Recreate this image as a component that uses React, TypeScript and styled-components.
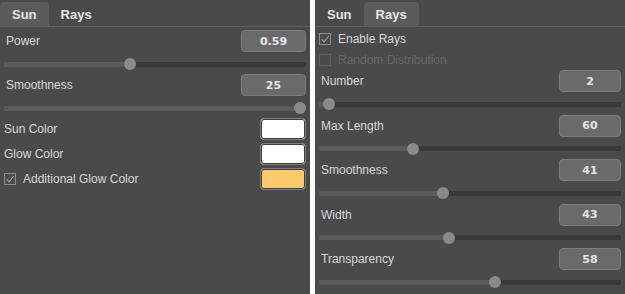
import React from 'react';
import styled, { createGlobalStyle } from 'styled-components';

const Global = createGlobalStyle`
  body {
    margin: 0;
    background: #ffffff;
  }
`;

const Page = styled.div`
  display: flex;
  gap: 5px;
  width: 625px;
  height: 294px;
  overflow: hidden;
`;

const Panel = styled.div`
  width: 310px;
  height: 294px;
  background: #4a4a4a;
  display: flex;
  flex-direction: column;
  font-family: 'Liberation Sans', Arial, sans-serif;
  font-size: 12px;
  color: #d6d9dc;
`;

const TabBar = styled.div`
  display: flex;
  height: 27px;
  box-sizing: border-box;
  padding-top: 2px;
  border-bottom: 1px solid #5e5e5e;
`;

const Tab = styled.div<{ $active?: boolean }>`
  height: 24px;
  padding: 0 12px;
  display: flex;
  align-items: center;
  font-size: 13px;
  font-weight: bold;
  color: #e4e6e8;
  background: ${(p) => (p.$active ? '#5b5b5b' : 'transparent')};
  border-radius: 4px 4px 0 0;
`;

const Content = styled.div<{ $top: number }>`
  display: flex;
  flex-direction: column;
  padding: ${(p) => p.$top}px 4px 0 4px;
`;

const Stack = styled.div<{ $gap: number }>`
  display: flex;
  flex-direction: column;
  gap: ${(p) => p.$gap}px;
`;

const Header = styled.div`
  height: 22px;
  display: flex;
  align-items: center;
  justify-content: space-between;
`;

const Label = styled.span<{ $indent?: number; $disabled?: boolean }>`
  padding-left: ${(p) => p.$indent ?? 0}px;
  color: ${(p) => (p.$disabled ? '#676767' : '#d6d9dc')};
`;

const ValueBox = styled.div<{ $w: number }>`
  width: ${(p) => p.$w}px;
  height: 22px;
  box-sizing: border-box;
  border: 1px solid #7c7c7c;
  border-radius: 4px;
  background: #6a6a6a;
  display: flex;
  align-items: center;
  justify-content: center;
  font-family: 'DejaVu Sans', Verdana, sans-serif;
  font-size: 11px;
  font-weight: bold;
  color: #e2e6ea;
`;

const TrackArea = styled.div`
  height: 22px;
  box-sizing: border-box;
  padding-top: 2px;
  display: flex;
  align-items: center;
`;

const Track = styled.div`
  position: relative;
  width: 100%;
  height: 5px;
  background: #393939;
`;

const Fill = styled.div`
  position: absolute;
  left: 0;
  top: 0;
  bottom: 0;
  background: #5b5b5b;
`;

const Thumb = styled.div`
  position: absolute;
  top: 50%;
  width: 12px;
  height: 12px;
  margin-top: -6px;
  border-radius: 50%;
  background: #8a8a8a;
`;

const Row = styled.div<{ $h: number }>`
  height: ${(p) => p.$h}px;
  display: flex;
  align-items: center;
  justify-content: space-between;
`;

const CheckLine = styled.div`
  display: flex;
  align-items: center;
  gap: 7px;
`;

const Swatch = styled.div<{ $color: string }>`
  width: 46px;
  height: 22px;
  box-sizing: border-box;
  border: 1px solid #7e7e7e;
  border-radius: 4px;
  background: ${(p) => p.$color};
  box-shadow: inset 0 0 0 1px #3e3e3e;
`;

function Check({ checked, disabled }: { checked?: boolean; disabled?: boolean }) {
  const c = disabled ? '#5f5f5f' : '#8e8e8e';
  return (
    <svg width="12" height="12" viewBox="0 0 12 12">
      <rect x="0.5" y="0.5" width="11" height="11" fill="none" stroke={c} />
      {checked && <polyline points="2.5,6 5,8.8 9.8,3" fill="none" stroke="#a2a2a2" strokeWidth="1.1" />}
    </svg>
  );
}

function Slider({ label, value, pos, w }: { label: string; value: string; pos: number; w: number }) {
  return (
    <div>
      <Header>
        <Label $indent={2}>{label}</Label>
        <ValueBox $w={w}>{value}</ValueBox>
      </Header>
      <TrackArea>
        <Track>
          <Fill style={{ width: `calc((100% - 12px) * ${pos} + 6px)` }} />
          <Thumb style={{ left: `calc((100% - 12px) * ${pos})` }} />
        </Track>
      </TrackArea>
    </div>
  );
}

export default function App() {
  return (
    <Page>
      <Global />
      <Panel>
        <TabBar>
          <Tab $active>Sun</Tab>
          <Tab>Rays</Tab>
        </TabBar>
        <Content $top={3}>
          <Slider label="Power" value="0.59" pos={0.415} w={65} />
          <Slider label="Smoothness" value="25" pos={1} w={65} />
          <Stack $gap={3}>
            <Row $h={22}>
              <Label>Sun Color</Label>
              <Swatch $color="#ffffff" />
            </Row>
            <Row $h={22}>
              <Label>Glow Color</Label>
              <Swatch $color="#ffffff" />
            </Row>
            <Row $h={22}>
              <CheckLine>
                <Check checked />
                <Label>Additional Glow Color</Label>
              </CheckLine>
              <Swatch $color="#ffc96e" />
            </Row>
          </Stack>
        </Content>
      </Panel>

      <Panel>
        <TabBar>
          <Tab>Sun</Tab>
          <Tab $active>Rays</Tab>
        </TabBar>
        <Content $top={1}>
          <Row $h={21}>
            <CheckLine>
              <Check checked />
              <Label>Enable Rays</Label>
            </CheckLine>
          </Row>
          <Row $h={21}>
            <CheckLine>
              <Check disabled />
              <Label $disabled>Random Distribution</Label>
            </CheckLine>
          </Row>
          <Stack $gap={0.5}>
            <Slider label="Number" value="2" pos={0.014} w={62} />
            <Slider label="Max Length" value="60" pos={0.303} w={62} />
            <Slider label="Smoothness" value="41" pos={0.407} w={62} />
            <Slider label="Width" value="43" pos={0.428} w={62} />
            <Slider label="Transparency" value="58" pos={0.586} w={62} />
          </Stack>
        </Content>
      </Panel>
    </Page>
  );
}
